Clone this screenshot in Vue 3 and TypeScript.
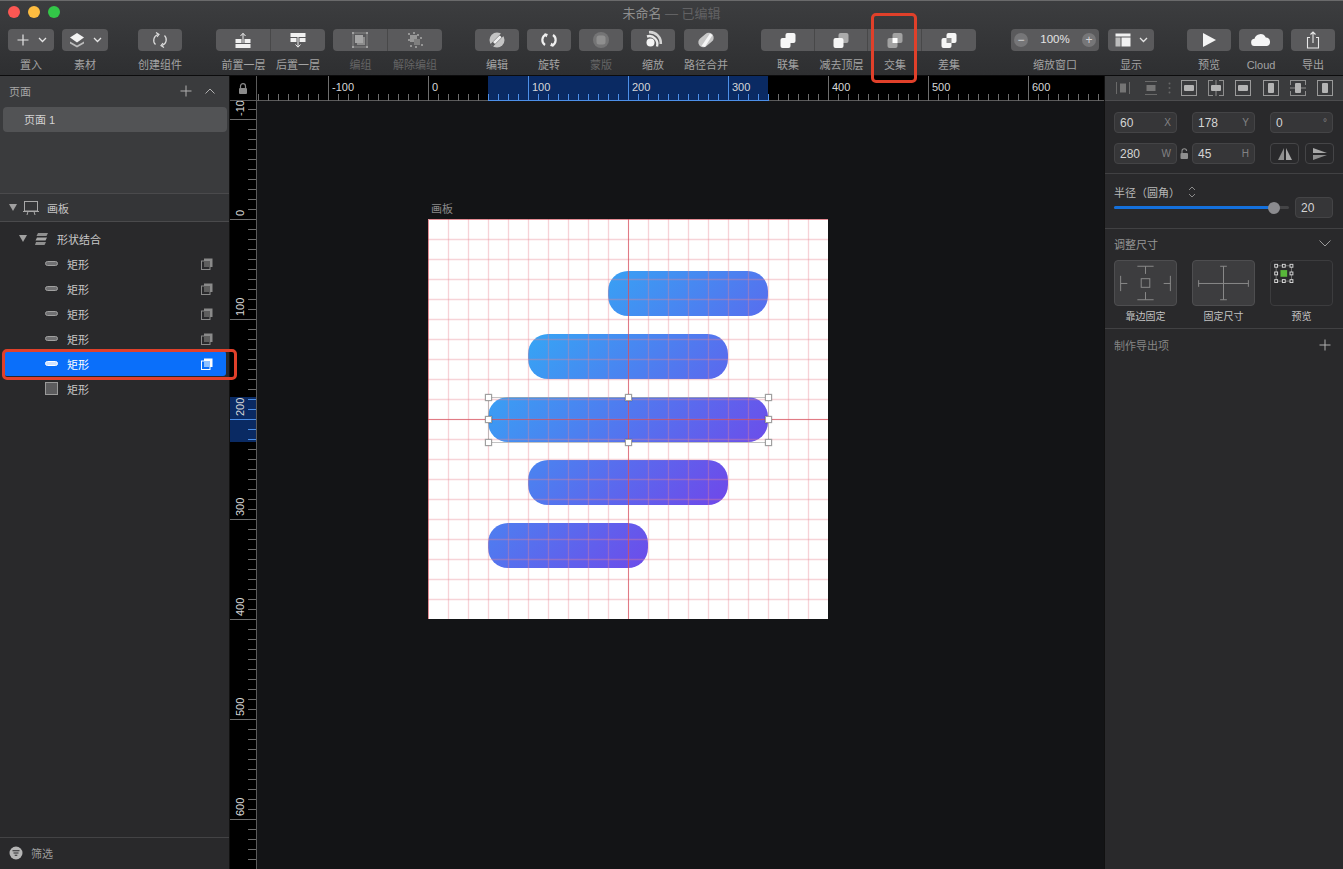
<script setup lang="ts">
type Tick = { pos: number; major: boolean; value: number; active: boolean }

// screen position of ruler value 0 in page px, minus the ruler's own origin
const originX = 428 - 257
const originY = 219 - 101

const hTicks: Tick[] = []
for (let v = -170; v <= 680; v += 10) {
  const screen = v + 428
  hTicks.push({ pos: v + originX + 0.5, major: v % 100 === 0, value: v, active: screen >= 488 && screen <= 768 })
}
const vTicks: Tick[] = []
for (let v = -110; v <= 650; v += 10) {
  const screen = v + 219
  vTicks.push({ pos: v + originY + 0.5, major: v % 100 === 0, value: v, active: screen >= 397 && screen <= 442 })
}

const gridLines = Array.from({ length: 19 }, (_, i) => (i + 1) * 20)
const bars = [
  { x: 180, y: 52, w: 160 },
  { x: 100, y: 115, w: 200 },
  { x: 60, y: 178, w: 280 },
  { x: 100, y: 241, w: 200 },
  { x: 60, y: 304, w: 160 }
]
const handles = [
  { x: 488, y: 397 }, { x: 628, y: 397 }, { x: 768, y: 397 },
  { x: 488, y: 419 }, { x: 768, y: 419 },
  { x: 488, y: 442 }, { x: 628, y: 442 }, { x: 768, y: 442 }
]
const layers = [false, false, false, false, true]
</script>

<template>
  <div class="window">
    <header class="toolbar">
      <div class="titlebar">
        <div class="lights"><i class="red"></i><i class="yellow"></i><i class="green"></i></div>
        <div class="title">未命名 <em>— 已编辑</em></div>
        <div></div>
      </div>
      <div class="tools">
        <div class="tool w46">
          <div class="btn">
            <svg width="14" height="14" viewBox="0 0 14 14"><path d="M7 1.5v11M1.5 7h11" stroke="#e4e4e4" stroke-width="1.2" /></svg>
            <svg class="chev" width="9" height="6" viewBox="0 0 9 6"><path d="M1 1l3.5 3.5L8 1" fill="none" stroke="#e4e4e4" stroke-width="1.3" /></svg>
          </div>
          <span>置入</span>
        </div>
        <div class="tool w46 ml8">
          <div class="btn">
            <svg width="16" height="16" viewBox="0 0 16 16"><path d="M1 9.5l7 4 7-4v2l-7 4-7-4z" fill="#bdbdbd" /><path d="M1 5.5L8 1l7 4.5-7 5z" fill="#f2f2f2" /></svg>
            <svg class="chev" width="9" height="6" viewBox="0 0 9 6"><path d="M1 1l3.5 3.5L8 1" fill="none" stroke="#e4e4e4" stroke-width="1.3" /></svg>
          </div>
          <span>素材</span>
        </div>
        <div class="tool w44 ml30">
          <div class="btn">
            <svg width="22" height="22" viewBox="0 0 22 22" fill="none" stroke="#dcdcdc" stroke-width="1.2"><path d="M9 5.5a6 6 0 0 0-2.5 10" /><path d="M13 16.5a6 6 0 0 0 2.5-10" /><path d="M7 3.5l3 2-2 2.5M15 18.5l-3-2 2-2.5" /></svg>
          </div>
          <span>创建组件</span>
        </div>

        <div class="seg ml34">
          <div class="tool w55">
            <div class="btn">
              <svg width="22" height="22" viewBox="0 0 22 22" fill="#f0f0f0"><rect x="3.5" y="15" width="15" height="4" /><rect x="3.5" y="10" width="6" height="4" /><rect x="12.5" y="10" width="6" height="4" /><path d="M11 4.5V14" stroke="#f0f0f0" /><path d="M8.5 7L11 4.3 13.5 7" fill="none" stroke="#f0f0f0" /></svg>
            </div>
            <span>前置一层</span>
          </div>
          <div class="tool w54">
            <div class="btn">
              <svg width="22" height="22" viewBox="0 0 22 22" fill="#f0f0f0"><rect x="3.5" y="4" width="15" height="4" /><rect x="3.5" y="9" width="6" height="4" /><rect x="12.5" y="9" width="6" height="4" /><path d="M11 8v10" stroke="#f0f0f0" /><path d="M8.5 15.5L11 18.2 13.5 15.5" fill="none" stroke="#f0f0f0" /></svg>
            </div>
            <span>后置一层</span>
          </div>
        </div>
        <div class="seg ml8 off">
          <div class="tool w55">
            <div class="btn">
              <svg width="22" height="22" viewBox="0 0 22 22"><rect x="4" y="4" width="14" height="14" fill="none" stroke="#858585" /><rect x="6" y="6" width="8" height="8" fill="#a5a5a5" /><path d="M14 8h2v8H8v-2h6z" fill="#8c8c8c" /><path d="M3 3h2v2H3zM17 3h2v2h-2zM3 17h2v2H3zM17 17h2v2h-2z" fill="#a0a0a0" /></svg>
            </div>
            <span>编组</span>
          </div>
          <div class="tool w54">
            <div class="btn">
              <svg width="22" height="22" viewBox="0 0 22 22" fill="#969696"><rect x="6" y="6" width="7" height="7" /><rect x="10" y="10" width="6" height="6" fill="#7f7f7f" /><path d="M4 4h2v2H4zM9 3h2v2H9zM13 5h2v2h-2zM4 10h2v2H4zM16 8h2v2h-2zM6 16h2v2H6zM11 17h2v2h-2zM17 15h2v2h-2z" /></svg>
            </div>
            <span>解除编组</span>
          </div>
        </div>

        <div class="tool w44 ml33">
          <div class="btn">
            <svg width="22" height="22" viewBox="0 0 22 22"><circle cx="11" cy="11" r="7.5" fill="#c4c4c4" /><path d="M4.5 15L16 3.5l2.5 2.5L7 17.5z" fill="#5a5a5c" /><path d="M7 13l6.5-6.5a3 3 0 0 1 2 2L9 15z" fill="#efefef" /></svg>
          </div>
          <span>编辑</span>
        </div>
        <div class="tool w44 ml8">
          <div class="btn">
            <svg width="22" height="22" viewBox="0 0 22 22" fill="none" stroke="#f0f0f0" stroke-width="2.2"><path d="M8 5.5a6 6 0 0 0-1 10.5" /><path d="M14 16.5a6 6 0 0 0 1-10.5" /><path d="M6.5 5l2.5.5L8 8M15.5 17l-2.5-.5L14 14" stroke-width="1.3" /></svg>
          </div>
          <span>旋转</span>
        </div>
        <div class="tool w44 ml8 off">
          <div class="btn">
            <svg width="22" height="22" viewBox="0 0 22 22"><circle cx="11" cy="11" r="8" fill="#747475" /><rect x="6.5" y="6.5" width="9" height="9" rx="2.5" fill="#8f8f8f" /></svg>
          </div>
          <span>蒙版</span>
        </div>
        <div class="tool w44 ml8">
          <div class="btn">
            <svg width="22" height="22" viewBox="0 0 22 22"><circle cx="8.5" cy="13.5" r="4" fill="#f4f4f4" /><path d="M5 7.5A8 8 0 0 1 15 17.5" fill="none" stroke="#e8e8e8" stroke-width="2.4" /><path d="M7 3.2A11 11 0 0 1 18.8 15" fill="none" stroke="#d4d4d4" stroke-width="2.6" /></svg>
          </div>
          <span>缩放</span>
        </div>
        <div class="tool w44 ml9">
          <div class="btn">
            <svg width="22" height="22" viewBox="0 0 22 22"><rect x="2.5" y="6" width="17" height="10" rx="5" transform="rotate(-40 11 11)" fill="#c7c7c7" /><path d="M6.5 17L15 4.5l2.5 1.5L10 18z" fill="#f6f6f6" /></svg>
          </div>
          <span>路径合并</span>
        </div>

        <div class="seg ml33">
          <div class="tool w54">
            <div class="btn">
              <svg width="22" height="22" viewBox="0 0 22 22" fill="#f6f6f6"><rect x="3.5" y="9" width="10" height="10" rx="2" /><rect x="8.5" y="4" width="10" height="10" rx="2" /></svg>
            </div>
            <span>联集</span>
          </div>
          <div class="tool w53">
            <div class="btn">
              <svg width="22" height="22" viewBox="0 0 22 22"><rect x="8.5" y="4" width="10" height="10" rx="2" fill="#ababab" /><rect x="3.5" y="9" width="10" height="10" rx="2" fill="#f6f6f6" /></svg>
            </div>
            <span>减去顶层</span>
          </div>
          <div class="tool w54">
            <div class="btn">
              <svg width="22" height="22" viewBox="0 0 22 22"><rect x="3.5" y="9" width="10" height="10" rx="2" fill="#a2a2a2" /><rect x="8.5" y="4" width="10" height="10" rx="2" fill="#a2a2a2" /><rect x="8.5" y="9" width="5" height="5" fill="#fff" /></svg>
            </div>
            <span>交集</span>
          </div>
          <div class="tool w54">
            <div class="btn">
              <svg width="22" height="22" viewBox="0 0 22 22"><rect x="3.5" y="9" width="10" height="10" rx="2" fill="#f6f6f6" /><rect x="8.5" y="4" width="10" height="10" rx="2" fill="#f6f6f6" /><rect x="8.5" y="9" width="5" height="5" fill="#8d8d8d" /></svg>
            </div>
            <span>差集</span>
          </div>
        </div>

        <div class="tool w88 ml35">
          <div class="btn zoom">
            <b>−</b><strong>100%</strong><b>+</b>
          </div>
          <span>缩放窗口</span>
        </div>
        <div class="tool w46 ml9">
          <div class="btn">
            <svg width="16" height="14" viewBox="0 0 16 14"><rect x=".5" y=".5" width="15" height="3" fill="#f2f2f2" /><rect x=".5" y="4.5" width="5" height="9" fill="#bdbdbd" /><rect x="6.5" y="4.5" width="9" height="9" fill="#f2f2f2" /></svg>
            <svg class="chev" width="9" height="6" viewBox="0 0 9 6"><path d="M1 1l3.5 3.5L8 1" fill="none" stroke="#e4e4e4" stroke-width="1.3" /></svg>
          </div>
          <span>显示</span>
        </div>
        <div class="tool w44 ml33">
          <div class="btn">
            <svg width="14" height="14" viewBox="0 0 14 14"><path d="M1 0l13 7-13 7z" fill="#f4f4f4" /></svg>
          </div>
          <span>预览</span>
        </div>
        <div class="tool w44 ml8">
          <div class="btn">
            <svg width="20" height="12" viewBox="0 0 20 12"><path d="M4 12a3.6 3.6 0 0 1-.5-7.2A6 6 0 0 1 14.8 3.6 4.3 4.3 0 0 1 16 12z" fill="#f6f6f6" /></svg>
          </div>
          <span>Cloud</span>
        </div>
        <div class="tool w44 ml8">
          <div class="btn">
            <svg width="14" height="18" viewBox="0 0 14 18" fill="none" stroke="#e8e8e8" stroke-width="1.1"><path d="M4 6.5H1.5V17h11V6.5H10" /><path d="M7 12V1M4.5 3.5L7 1l2.5 2.5" /></svg>
          </div>
          <span>导出</span>
        </div>
      </div>
    </header>

    <div class="body">
      <aside class="left">
        <section class="pages">
          <div class="pages-head">
            <span>页面</span>
            <svg width="12" height="12" viewBox="0 0 12 12"><path d="M6 .5v11M.5 6h11" stroke="#b0b0b0" /></svg>
            <svg class="up" width="10" height="6" viewBox="0 0 10 6"><path d="M.5 5.5L5 1l4.5 4.5" fill="none" stroke="#b0b0b0" /></svg>
          </div>
          <div class="page-row">页面 1</div>
        </section>
        <div class="artboard-row">
          <i class="tri"></i>
          <svg width="16" height="15" viewBox="0 0 16 15" fill="none" stroke="#a8a8a8"><rect x="1.5" y="1.5" width="13" height="9.5" /><path d="M0 11.5h16M4 15l1-3.5M12 15l-1-3.5" /></svg>
          <span>画板</span>
        </div>
        <div class="layers">
          <div class="layer group-row">
            <i class="tri"></i>
            <svg width="14" height="14" viewBox="0 0 14 14" fill="#8f8f8f"><path d="M3 1h10l-1.5 3h-10z" /><path d="M2 5.5h10l-1.500 3h-10z" fill="#a8a8a8" /><path d="M1 10h10l-1.5 3H0z" /></svg>
            <span>形状结合</span>
          </div>
          <div v-for="(sel, i) in layers" :key="i" class="layer item" :class="{ selected: sel }">
            <i class="pill"></i>
            <span>矩形</span>
            <svg class="mask" width="12" height="12" viewBox="0 0 12 12"><path d="M3 .5h8.5V9H9V3H3z" :fill="sel ? '#fff' : '#8a8a8a'" /><rect x=".5" y="3" width="8.5" height="8.5" fill="none" :stroke="sel ? '#fff' : '#8a8a8a'" /><rect x="3" y="3" width="6" height="6" :fill="sel ? '#8fc1ff' : '#5e5e5e'" /></svg>
          </div>
          <div class="layer item">
            <i class="square"></i>
            <span>矩形</span>
          </div>
        </div>
        <footer class="filter">
          <svg width="14" height="14" viewBox="0 0 14 14"><circle cx="7" cy="7" r="6.5" fill="#b5b5b5" /><path d="M3.5 4.8h7M4.5 7h5M5.7 9.2h2.6" stroke="#2a2a2c" stroke-width="1.1" /></svg>
          <span>筛选</span>
        </footer>
      </aside>

      <main class="stage">
        <div class="corner">
          <svg width="10" height="11" viewBox="0 0 10 11"><path d="M2.5 5V3.2a2.5 2.5 0 0 1 5 0V5" fill="none" stroke="#8a8a8a" stroke-width="1.2" /><rect x="1" y="5" width="8" height="6" rx="1" fill="#8a8a8a" /></svg>
        </div>
        <svg class="hruler" width="847" height="25" viewBox="0 0 847 25">
          <rect x="231" y="0" width="280" height="25" fill="#0a2a63" />
          <line x1="0" x2="847" y1="24.5" y2="24.5" stroke="#5a5a5a" />
          <template v-for="t in hTicks" :key="t.value">
            <line :x1="t.pos" :x2="t.pos" :y1="t.major ? 0 : 18" y2="25" :stroke="t.active ? '#4c8fe8' : '#6e6e6e'" />
            <text v-if="t.major && t.value >= -100 && t.value <= 600" :x="t.pos + 3.5" y="15" class="rtext">{{ t.value }}</text>
          </template>
          <line x1="231" x2="511" y1="24.5" y2="24.5" stroke="#4c8fe8" />
        </svg>
        <svg class="vruler" width="27" height="768" viewBox="0 0 27 768">
          <rect x="0" y="296" width="26" height="45" fill="#0a2a63" />
          <line x1="26.5" x2="26.5" y1="0" y2="768" stroke="#5a5a5a" />
          <template v-for="t in vTicks" :key="t.value">
            <line :y1="t.pos" :y2="t.pos" :x1="t.major ? 0 : 18" x2="26" :stroke="t.active ? '#4c8fe8' : '#6e6e6e'" />
            <text v-if="t.major" class="rtext" text-anchor="start" :transform="`translate(14 ${t.pos - 3.5}) rotate(-90)`">{{ t.value }}</text>
          </template>
        </svg>
        <div class="canvas">
          <span class="board-name">画板</span>
          <svg class="board" width="400" height="400" viewBox="0 0 400 400">
            <defs>
              <linearGradient id="fill" gradientUnits="userSpaceOnUse" x1="100" y1="100" x2="295" y2="295">
                <stop offset="0" stop-color="#33a9f5" />
                <stop offset="1" stop-color="#7046e9" />
              </linearGradient>
            </defs>
            <rect width="400" height="400" fill="#fff" />
            <rect v-for="b in bars" :key="b.y" :x="b.x" :y="b.y" :width="b.w" height="45" rx="20" fill="url(#fill)" />
            <template v-for="g in gridLines" :key="g">
              <line :x1="g + 0.5" :x2="g + 0.5" y1="0" y2="400" stroke="#ea8593" stroke-opacity=".36" stroke-width="1.3" />
              <line :y1="g + 0.5" :y2="g + 0.5" x1="0" x2="400" stroke="#ea8593" stroke-opacity=".36" stroke-width="1.3" />
            </template>
            <line x1="200.5" x2="200.5" y1="0" y2="400" stroke="#d2414e" stroke-opacity=".6" />
            <line y1="200.5" y2="200.5" x1="0" x2="400" stroke="#d2414e" stroke-opacity=".6" />
            <path d="M.5 400V.5H400" fill="none" stroke="#d2414e" stroke-opacity=".6" />
            <rect x="60.5" y="178.5" width="280" height="45" fill="none" stroke="#a9a9a9" stroke-opacity=".7" />
          </svg>
          <i v-for="h in handles" :key="`${h.x}-${h.y}`" class="handle" :style="{ left: h.x - 257 + 'px', top: h.y - 101 + 'px' }"></i>
        </div>
      </main>

      <aside class="right">
        <div class="align">
          <svg width="14" height="14" viewBox="0 0 14 14"><path d="M.5 1v12M13.5 1v12" stroke="#6a6a6a" /><rect x="4" y="2.5" width="6" height="9" fill="#757575" /></svg>
          <svg class="second" width="14" height="14" viewBox="0 0 14 14"><path d="M1 .5h12M1 13.5h12" stroke="#6a6a6a" /><rect x="2.5" y="4" width="9" height="6" fill="#757575" /></svg>
          <svg class="dots" width="3" height="12" viewBox="0 0 3 12" fill="#666"><circle cx="1.5" cy="1.5" r="1" /><circle cx="1.5" cy="6" r="1" /><circle cx="1.5" cy="10.5" r="1" /></svg>
          <svg width="16" height="16" viewBox="0 0 16 16"><rect x=".5" y=".5" width="15" height="15" fill="none" stroke="#9a9a9a" /><rect x="3" y="5" width="10" height="6" rx="1" fill="#b4b4b4" /></svg>
          <svg width="16" height="16" viewBox="0 0 16 16"><path d="M8 0v16M0 .5h5M11 .5h5M0 15.5h5M11 15.5h5M.5 0v16M15.5 0v16" stroke="#8e8e8e" /><rect x="3" y="5" width="10" height="6" rx="1" fill="#b4b4b4" /></svg>
          <svg width="16" height="16" viewBox="0 0 16 16"><rect x=".5" y=".5" width="15" height="15" fill="none" stroke="#9a9a9a" /><rect x="3" y="5" width="10" height="6" rx="1" fill="#b4b4b4" /></svg>
          <svg width="16" height="16" viewBox="0 0 16 16"><rect x=".5" y=".5" width="15" height="15" fill="none" stroke="#9a9a9a" /><rect x="5" y="3" width="6" height="10" rx="1" fill="#b4b4b4" /></svg>
          <svg width="16" height="16" viewBox="0 0 16 16"><path d="M0 8h16M.5 0v5M.5 11v5M15.5 0v5M15.5 11v5M0 .5h16M0 15.5h16" stroke="#8e8e8e" /><rect x="5" y="3" width="6" height="10" rx="1" fill="#b4b4b4" /></svg>
          <svg width="16" height="16" viewBox="0 0 16 16"><rect x=".5" y=".5" width="15" height="15" fill="none" stroke="#9a9a9a" /><rect x="5" y="3" width="6" height="10" rx="1" fill="#b4b4b4" /></svg>
        </div>

        <section class="geometry">
          <div class="fields">
            <label class="field"><span>60</span><small>X</small></label>
            <label class="field"><span>178</span><small>Y</small></label>
            <label class="field"><span>0</span><small>°</small></label>
          </div>
          <div class="fields">
            <label class="field"><span>280</span><small>W</small></label>
            <svg class="lock" width="9" height="11" viewBox="0 0 9 11"><path d="M2 5V3a2.3 2.3 0 0 1 4.6 0" fill="none" stroke="#8f8f8f" stroke-width="1.1" /><rect x=".5" y="5" width="7.5" height="6" rx="1" fill="#8f8f8f" /></svg>
            <label class="field"><span>45</span><small>H</small></label>
            <div class="flips">
              <button type="button"><svg width="14" height="12" viewBox="0 0 14 12"><path d="M6 0v12H0z" fill="#8f8f8f" /><path d="M8 0v12h6z" fill="#a8a8a8" /></svg></button>
              <button type="button"><svg width="14" height="12" viewBox="0 0 14 12"><path d="M0 0l14 5H0z" fill="#a8a8a8" /><path d="M0 12l14-5H0z" fill="#8f8f8f" /></svg></button>
            </div>
          </div>
        </section>

        <section class="radius">
          <div class="radius-label">
            半径（圆角）
            <svg width="8" height="12" viewBox="0 0 8 12" fill="none" stroke="#8a8a8a"><path d="M1 4l3-3 3 3M1 8l3 3 3-3" /></svg>
          </div>
          <div class="radius-row">
            <div class="slider"><i class="fill"></i><i class="knob"></i></div>
            <label class="field small"><span>20</span></label>
          </div>
        </section>

        <section class="resize">
          <div class="head">
            <span>调整尺寸</span>
            <svg width="12" height="7" viewBox="0 0 12 7"><path d="M.5 .5L6 6 11.5 .5" fill="none" stroke="#9a9a9a" /></svg>
          </div>
          <div class="boxes">
            <div class="box-col">
              <svg class="box" width="63" height="46" viewBox="0 0 63 46" fill="none" stroke="#8c8c8c">
                <rect x="27" y="18.5" width="9" height="9" />
                <path d="M23 5.5h17M31.5 5.500v8M23 40.5h17M31.5 32.5v8M5.5 15.5v16M5.5 23.5h7M57.5 15.5v16M50.5 23.5h7" />
              </svg>
              <span>靠边固定</span>
            </div>
            <div class="box-col">
              <svg class="box" width="63" height="46" viewBox="0 0 63 46" fill="none" stroke="#8c8c8c">
                <path d="M5.5 23.5h52M5.5 20v7M57.5 20v7M31.5 5.5v35M28 5.5h7M28 40.5h7" />
              </svg>
              <span>固定尺寸</span>
            </div>
            <div class="box-col">
              <svg class="box dark" width="63" height="46" viewBox="0 0 63 46">
                <rect x="5" y="5" width="16" height="16" fill="none" stroke="#777" />
                <rect x="9.5" y="9.5" width="7" height="7" fill="#58b63a" />
                <g fill="#2a2a2c" stroke="#d8d8d8">
                  <rect x="3.5" y="3.5" width="3" height="3" /><rect x="11.5" y="3.5" width="3" height="3" /><rect x="19.5" y="3.5" width="3" height="3" />
                  <rect x="3.5" y="11.5" width="3" height="3" /><rect x="19.5" y="11.5" width="3" height="3" />
                  <rect x="3.5" y="19.5" width="3" height="3" /><rect x="11.5" y="19.5" width="3" height="3" /><rect x="19.5" y="19.5" width="3" height="3" />
                </g>
              </svg>
              <span>预览</span>
            </div>
          </div>
        </section>

        <section class="export">
          <span>制作导出项</span>
          <svg width="12" height="12" viewBox="0 0 12 12"><path d="M6 .5v11M.5 6h11" stroke="#b0b0b0" /></svg>
        </section>
      </aside>
    </div>

    <!-- red annotation marks over the screenshot -->
    <div class="mark mark-tool"></div>
    <div class="mark mark-layer"></div>
  </div>
</template>

<style scoped>
.window {
  position: relative;
  width: 1343px;
  height: 869px;
  overflow: hidden;
  display: flex;
  flex-direction: column;
  background: #131416;
  font-family: "Liberation Sans", "Noto Sans CJK SC", sans-serif;
  font-size: 11px;
  color: #a8a8a8;
}

/* toolbar */
.toolbar {
  height: 76px;
  flex: none;
  box-sizing: border-box;
  border-top: 1px solid #6a6a6b;
  border-bottom: 1px solid #0c0c0d;
  background: linear-gradient(#3c3d3f, #2e2f31);
}
.titlebar {
  height: 28px;
  padding-bottom: 6px;
  box-sizing: border-box;
  display: grid;
  grid-template-columns: 1fr auto 1fr;
  align-items: center;
}
.lights {
  display: flex;
  gap: 8px;
  padding-left: 8px;
}
.lights i {
  width: 12px;
  height: 12px;
  border-radius: 50%;
}
.red { background: #fc5753; }
.yellow { background: #fdbc40; }
.green { background: #33c748; }
.title {
  font-size: 13px;
  color: #8e8e8e;
}
.title em {
  font-style: normal;
  color: #626264;
}
.tools {
  display: flex;
  padding-left: 8px;
}
.seg {
  display: flex;
}
.tool {
  display: flex;
  flex-direction: column;
  align-items: center;
  flex: none;
}
.tool > span {
  margin-top: 6px;
  line-height: 16px;
  white-space: nowrap;
  color: #a3a3a3;
}
.btn {
  width: 100%;
  height: 22px;
  display: flex;
  align-items: center;
  justify-content: center;
  border-radius: 4px;
  background: #5a5a5c;
}
.chev { margin-left: 8px; }
.seg .btn {
  border-radius: 0;
  border-right: 1px solid #484849;
  box-sizing: border-box;
}
.seg .tool:first-child .btn { border-radius: 4px 0 0 4px; }
.seg .tool:last-child .btn { border-radius: 0 4px 4px 0; border-right: 0; }
.off > span, .off .tool > span { color: #646465; }
.w44 { width: 44px; }
.w46 { width: 46px; }
.w53 { width: 53px; }
.w54 { width: 54px; }
.w55 { width: 55px; }
.w88 { width: 88px; }
.ml8 { margin-left: 8px; }
.ml9 { margin-left: 9px; }
.ml30 { margin-left: 30px; }
.ml33 { margin-left: 33px; }
.ml34 { margin-left: 34px; }
.ml35 { margin-left: 35px; }
.zoom {
  justify-content: space-between;
  padding: 0 3px;
  box-sizing: border-box;
}
.zoom b {
  width: 14px;
  height: 14px;
  border-radius: 50%;
  background: #767678;
  color: #d8d8d8;
  font-weight: 400;
  font-size: 12px;
  line-height: 14px;
  text-align: center;
}
.zoom strong {
  font-weight: 400;
  color: #e4e4e4;
  font-size: 11.5px;
  line-height: 20px;
  align-self: flex-start;
}

.body {
  flex: 1;
  min-height: 0;
  display: grid;
  grid-template-columns: 230px 874px 239px;
}

/* left column */
.left {
  display: flex;
  flex-direction: column;
  background: #29292b;
  border-right: 1px solid #111;
  box-sizing: border-box;
  min-height: 0;
}
.pages {
  height: 117px;
  flex: none;
  background: #3a3b3d;
  box-sizing: border-box;
  padding: 0 2px 0 3px;
}
.pages-head {
  height: 29px;
  margin-bottom: 2px;
  display: flex;
  align-items: center;
  padding: 0 12px 0 6px;
  color: #a6a6a6;
}
.pages-head span { flex: 1; }
.up { margin-left: 13px; }
.page-row {
  height: 25px;
  line-height: 26px;
  padding-left: 21px;
  background: #525355;
  border-radius: 4px;
  color: #d2d2d2;
}
.artboard-row {
  height: 29px;
  flex: none;
  box-sizing: border-box;
  display: flex;
  align-items: center;
  gap: 6px;
  padding-left: 9px;
  background: #343537;
  border-top: 1px solid #4a4a4c;
  border-bottom: 1px solid #4a4a4c;
  color: #c4c4c4;
}
.artboard-row span { margin-left: 2px; }
.tri {
  width: 0;
  height: 0;
  border-left: 4.5px solid transparent;
  border-right: 4.5px solid transparent;
  border-top: 7px solid #a0a0a0;
}
.layers {
  flex: 1;
  padding: 4px 3px 0 4px;
}
.layer {
  height: 25px;
  display: flex;
  align-items: center;
  color: #c8c8c8;
}
.group-row {
  padding-left: 15px;
  gap: 8px;
}
.item { padding-left: 41px; }
.item span { margin-left: 9px; flex: 1; }
.selected {
  background: #0a6ffa;
  border-radius: 3px;
  color: #fff;
}
.pill {
  width: 13px;
  height: 5px;
  box-sizing: border-box;
  border-radius: 3px;
  background: #707072;
  border: 1px solid #a0a0a0;
}
.selected .pill {
  background: #cfe2ff;
  border-color: #fff;
}
.square {
  width: 13px;
  height: 13px;
  box-sizing: border-box;
  background: #5c5c5e;
  border: 1px solid #9a9a9a;
}
.mask { margin-right: 13px; }
.filter {
  height: 32px;
  flex: none;
  box-sizing: border-box;
  display: flex;
  align-items: center;
  gap: 8px;
  padding: 0 0 2px 9px;
  border-top: 1px solid #434345;
  color: #9c9c9c;
}

/* rulers + canvas */
.stage {
  display: grid;
  grid-template-columns: 27px 847px;
  grid-template-rows: 25px 768px;
  background: #131416;
}
.corner {
  background: #000;
  border-right: 1px solid #5a5a5a;
  border-bottom: 1px solid #5a5a5a;
  box-sizing: border-box;
  display: flex;
  align-items: center;
  justify-content: center;
}
.hruler, .vruler {
  display: block;
  background: #000;
}
.rtext {
  font-family: "Liberation Sans", sans-serif;
  font-size: 11px;
  fill: #d8d8d8;
}
.canvas {
  position: relative;
  overflow: hidden;
}
.board {
  position: absolute;
  left: 171px;
  top: 118px;
  display: block;
}
.board-name {
  position: absolute;
  left: 174px;
  top: 100px;
  color: #8a8a8a;
  line-height: 16px;
}
.handle {
  position: absolute;
  width: 7px;
  height: 7px;
  margin: -3.5px 0 0 -3.5px;
  box-sizing: border-box;
  background: #fff;
  border: 1px solid #a0a0a0;
  box-shadow: 0 0 1px rgba(0, 0, 0, .4);
}

/* right column */
.right {
  background: #29292b;
  border-left: 1px solid #111;
  box-sizing: border-box;
}
.align {
  height: 25px;
  box-sizing: border-box;
  display: flex;
  align-items: center;
  gap: 11.3px;
  padding-left: 11px;
  background: #3a3b3d;
  border-bottom: 1px solid #4c4c4e;
}
.second { margin-left: 3px; }
.dots { margin: 0 -1px 0 -2px; }
.geometry {
  height: 73px;
  padding: 11px 9px 0 9px;
  box-sizing: border-box;
  border-bottom: 1px solid #414143;
}
.fields {
  display: flex;
  align-items: center;
  margin-bottom: 10px;
}
.field {
  width: 63px;
  height: 21px;
  box-sizing: border-box;
  display: flex;
  align-items: center;
  justify-content: space-between;
  padding: 0 5px;
  flex: none;
  border: 1px solid #444446;
  border-radius: 4px;
  background: #363638;
  color: #d4d4d4;
  font-size: 12px;
}
.field + .field { margin-left: 15px; }
.field small {
  font-size: 10px;
  color: #828284;
}
.lock { margin: 0 3px; }
.flips {
  display: flex;
  gap: 6px;
  margin-left: 15px;
}
.flips button {
  width: 29px;
  height: 21px;
  padding: 0;
  display: flex;
  align-items: center;
  justify-content: center;
  background: #29292b;
  border: 1px solid #454547;
  border-radius: 4px;
}
.radius {
  height: 55px;
  box-sizing: border-box;
  padding: 10px 9px 0;
  border-bottom: 1px solid #414143;
}
.radius-label {
  display: flex;
  align-items: center;
  gap: 8px;
  height: 16px;
  color: #b8b8b8;
}
.radius-row {
  display: flex;
  align-items: center;
  gap: 6px;
  margin-top: -3px;
}
.slider {
  position: relative;
  width: 175px;
  height: 3px;
  border-radius: 2px;
  background: #444446;
}
.fill {
  position: absolute;
  left: 0;
  top: 0;
  bottom: 0;
  width: 160px;
  border-radius: 2px;
  background: #1470dc;
}
.knob {
  position: absolute;
  left: 154px;
  top: -4.5px;
  width: 12px;
  height: 12px;
  border-radius: 50%;
  background: #8b8b8f;
}
.field.small {
  width: 38px;
}
.resize {
  height: 100px;
  box-sizing: border-box;
  padding: 0 9px;
  border-bottom: 1px solid #414143;
}
.head {
  height: 29px;
  margin-bottom: 2px;
  display: flex;
  align-items: center;
  justify-content: space-between;
  padding-right: 3px;
  color: #959595;
}
.boxes {
  display: flex;
  gap: 15px;
}
.box-col {
  display: flex;
  flex-direction: column;
  align-items: center;
  width: 63px;
}
.box-col span {
  margin-top: 4px;
  line-height: 14px;
  font-size: 10px;
  color: #c4c4c4;
}
.box {
  display: block;
  box-sizing: border-box;
  border: 1px solid #4e4e50;
  border-radius: 4px;
  background: #3d3d3f;
}
.box.dark {
  background: #2a2a2c;
  border-color: #3c3c3e;
}
.export {
  height: 31px;
  padding: 0 12px 0 9px;
  display: flex;
  align-items: center;
  justify-content: space-between;
  color: #858585;
}

/* annotations */
.mark {
  position: absolute;
  box-sizing: border-box;
  border: 3px solid #e0402a;
  border-radius: 5px;
  pointer-events: none;
}
.mark-tool {
  left: 871px;
  top: 13px;
  width: 46px;
  height: 70px;
}
.mark-layer {
  left: 2px;
  top: 349px;
  width: 235px;
  height: 31px;
}
</style>

<style>
html, body {
  background: #131416;
}
</style>
